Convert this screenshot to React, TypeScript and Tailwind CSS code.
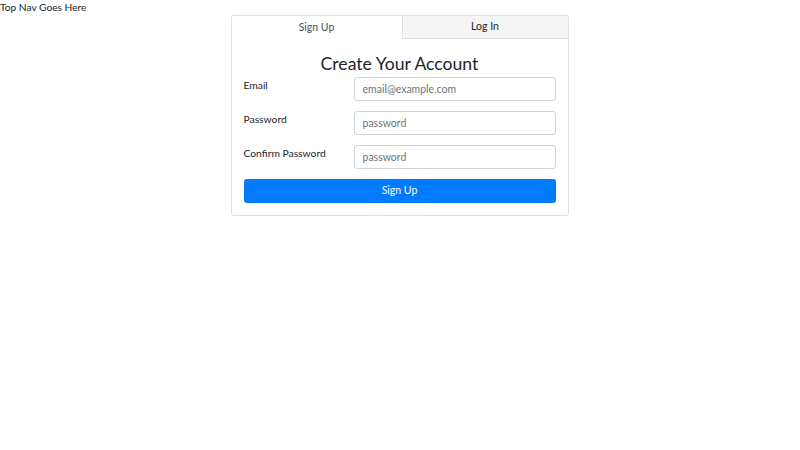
import React from "react";

export default function App() {
  const font = { fontFamily: '"Segoe UI", Lato, "Open Sans", sans-serif' };
  const inputCls =
    "flex-1 h-[24px] border border-[#ced4da] rounded-[3px] px-[8px] text-[10.5px] text-[#495057] placeholder:text-[#6c757d] outline-none";
  return (
    <div className="w-[800px] h-[450px] bg-white text-[#212529]" style={font}>
      <div className="text-[10.2px] leading-[15px] h-[15px]">Top Nav Goes Here</div>
      <div className="flex justify-center">
        <div className="w-[338px] border border-[#dfdfdf] rounded-[3px] -ml-[1px]">
          <div className="flex h-[23px] text-[10.5px]">
            <div className="w-[171px] flex items-center justify-center text-[#495057] bg-white border-r border-[#dfdfdf]">
              Sign Up
            </div>
            <div className="flex-1 flex items-center justify-center bg-[#f5f5f5] border-b border-[#dfdfdf] rounded-tr-[3px]">
              Log In
            </div>
          </div>
          <div className="px-[12px] pt-[13px] pb-[12px]">
            <h1 className="text-[17.6px] leading-[24px] text-center mb-[1px]">Create Your Account</h1>
            <div className="flex flex-col gap-[10px]">
              <div className="flex">
                <label className="w-[110px] text-[10.3px] pt-[1px]">Email</label>
                <input className={inputCls} placeholder="email@example.com" />
              </div>
              <div className="flex">
                <label className="w-[110px] text-[10.3px] pt-[1px]">Password</label>
                <input className={inputCls} placeholder="password" />
              </div>
              <div className="flex">
                <label className="w-[110px] text-[10.3px] pt-[1px]">Confirm Password</label>
                <input className={inputCls} placeholder="password" />
              </div>
              <button className="h-[24px] bg-[#007bff] text-white text-[10.5px] rounded-[3px]">Sign Up</button>
            </div>
          </div>
        </div>
      </div>
    </div>
  );
}
